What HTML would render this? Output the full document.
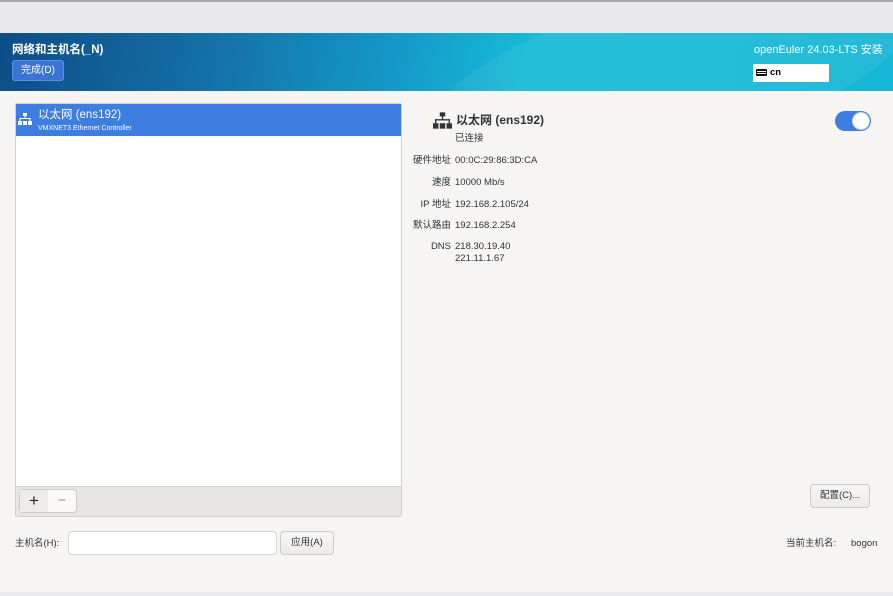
<!DOCTYPE html>
<html><head><meta charset="utf-8"><style>
*{margin:0;padding:0;box-sizing:border-box}
body{width:893px;height:596px;overflow:hidden;background:#f6f5f4;font-family:"Liberation Sans","Noto Sans CJK SC",sans-serif;position:relative;color:#2e3436}
.a{position:absolute}
.top{left:0;top:0;width:893px;height:33px;background:#e8e8ed;border-top:2px solid #a8a8ac}
.hdr{left:0;top:33px;width:893px;height:58px;background:linear-gradient(100deg,#0d4d86 0%,#1572aa 25%,#149bc8 45%,#18bcd9 60%,#17b6d6 100%);overflow:hidden}
.btn{border:1px solid #cfcbc6;border-radius:4px;background:linear-gradient(#f8f7f6,#ecebe9);text-align:center;color:#2e3436}
.lbl{font-size:9.5px;line-height:12px;color:#2e3436;text-align:right;width:60px;left:391px}
.val{font-size:9.5px;line-height:12px;left:455px}
.t{line-height:12px}
</style></head><body>
<div class="a top"></div>
<div class="a hdr">
 <div class="a" style="left:420px;top:-40px;width:500px;height:160px;border-radius:50%;background:rgba(255,255,255,0.06);transform:rotate(-15deg)"></div>
</div>
<div class="a" style="left:12px;top:43px;font-size:11.5px;line-height:14px;font-weight:bold;color:#fff">网络和主机名(_N)</div>
<div class="a" style="left:12px;top:60px;width:52px;height:21px;border:1px solid #5d8fe0;border-radius:3px;background:#3b74d6;color:#fff;font-size:10px;line-height:19px;text-align:center">完成(D)</div>
<div class="a" style="left:754px;top:44px;font-size:11px;line-height:13px;color:#fff">openEuler 24.03-LTS 安装</div>
<div class="a" style="left:753px;top:64px;width:76px;height:18px;background:#fff;font-size:9.5px;font-weight:bold;line-height:18px;padding-left:17px;color:#000">cn</div>
<div class="a" style="left:756px;top:69px;width:11px;height:7px;background:#111;border-radius:1px"></div>
<div class="a" style="left:757px;top:71px;width:9px;height:1px;background:#fff"></div>
<div class="a" style="left:757px;top:73px;width:9px;height:1px;background:#fff"></div>
<div class="a" style="left:0;top:592px;width:893px;height:4px;background:#ebebef"></div>

<div class="a" style="left:15px;top:103px;width:387px;height:414px;background:#fff;border:1px solid #d5d1cc;border-radius:2px"></div>
<div class="a" style="left:16px;top:104px;width:385px;height:32px;background:#3d7ee0"></div>
<svg class="a" style="left:18px;top:113px" width="14" height="12" viewBox="0 0 14 12"><g fill="#fff"><rect x="5" y="0" width="4" height="3"/><rect x="6.5" y="3" width="1" height="3"/><rect x="1.5" y="5" width="11" height="1"/><rect x="1.5" y="5" width="1" height="3"/><rect x="11.5" y="5" width="1" height="3"/><rect x="0" y="8" width="4" height="4"/><rect x="10" y="8" width="4" height="4"/><rect x="5" y="8" width="4" height="4"/></g></svg>
<div class="a" style="left:38px;top:108px;font-size:11.5px;line-height:14px;color:#fff">以太网 (ens192)</div>
<div class="a" style="left:38px;top:124px;font-size:7px;line-height:9px;color:#fff">VMXNET3 Ethernet Controller</div>
<div class="a" style="left:16px;top:486px;width:385px;height:30px;background:#e8e6e3;border-top:1px solid #d5d1cc"></div>
<div class="a" style="left:19px;top:489px;width:58px;height:24px;border:1px solid #cfcbc6;border-radius:4px;background:#faf9f8"></div>
<div class="a" style="left:20px;top:490px;width:28px;height:22px;background:#edecea;font-size:17px;line-height:21px;text-align:center;color:#222">+</div>
<div class="a" style="left:48px;top:490px;width:28px;height:22px;font-size:15px;line-height:21px;text-align:center;color:#999">−</div>

<svg class="a" style="left:433px;top:112px" width="19" height="17" viewBox="0 0 14 12"><g fill="#2e3436"><rect x="5" y="0" width="4" height="3"/><rect x="6.5" y="3" width="1" height="3"/><rect x="1.5" y="5" width="11" height="1"/><rect x="1.5" y="5" width="1" height="3"/><rect x="11.5" y="5" width="1" height="3"/><rect x="0" y="8" width="4" height="4"/><rect x="10" y="8" width="4" height="4"/><rect x="5" y="8" width="4" height="4"/></g></svg>
<div class="a" style="left:456px;top:113px;font-size:12px;line-height:15px;font-weight:bold">以太网 (ens192)</div>
<div class="a t" style="left:455px;top:133px;font-size:9.5px">已连接</div>
<div class="a lbl" style="top:155px">硬件地址</div><div class="a val" style="top:155px">00:0C:29:86:3D:CA</div>
<div class="a lbl" style="top:177px">速度</div><div class="a val" style="top:177px">10000 Mb/s</div>
<div class="a lbl" style="top:199px">IP 地址</div><div class="a val" style="top:199px">192.168.2.105/24</div>
<div class="a lbl" style="top:220px">默认路由</div><div class="a val" style="top:220px">192.168.2.254</div>
<div class="a lbl" style="top:241px">DNS</div><div class="a val" style="top:241px">218.30.19.40<br>221.11.1.67</div>
<div class="a" style="left:835px;top:111px;width:36px;height:20px;border-radius:10px;background:#3d7ee0"></div>
<div class="a" style="left:852px;top:112px;width:18px;height:18px;border-radius:50%;background:#fff;border:1px solid #c8d4e8"></div>
<div class="a btn" style="left:810px;top:484px;width:60px;height:24px;line-height:22px;font-size:9.5px">配置(C)...</div>

<div class="a t" style="left:15px;top:538px;font-size:9.5px">主机名(H):</div>
<div class="a" style="left:68px;top:531px;width:209px;height:24px;background:#fff;border:1px solid #d8d4d0;border-radius:4px"></div>
<div class="a btn" style="left:280px;top:531px;width:54px;height:24px;line-height:22px;font-size:9.5px">应用(A)</div>
<div class="a t" style="left:786px;top:538px;font-size:9.5px">当前主机名:</div>
<div class="a t" style="left:851px;top:538px;font-size:9.5px">bogon</div>
</body></html>
